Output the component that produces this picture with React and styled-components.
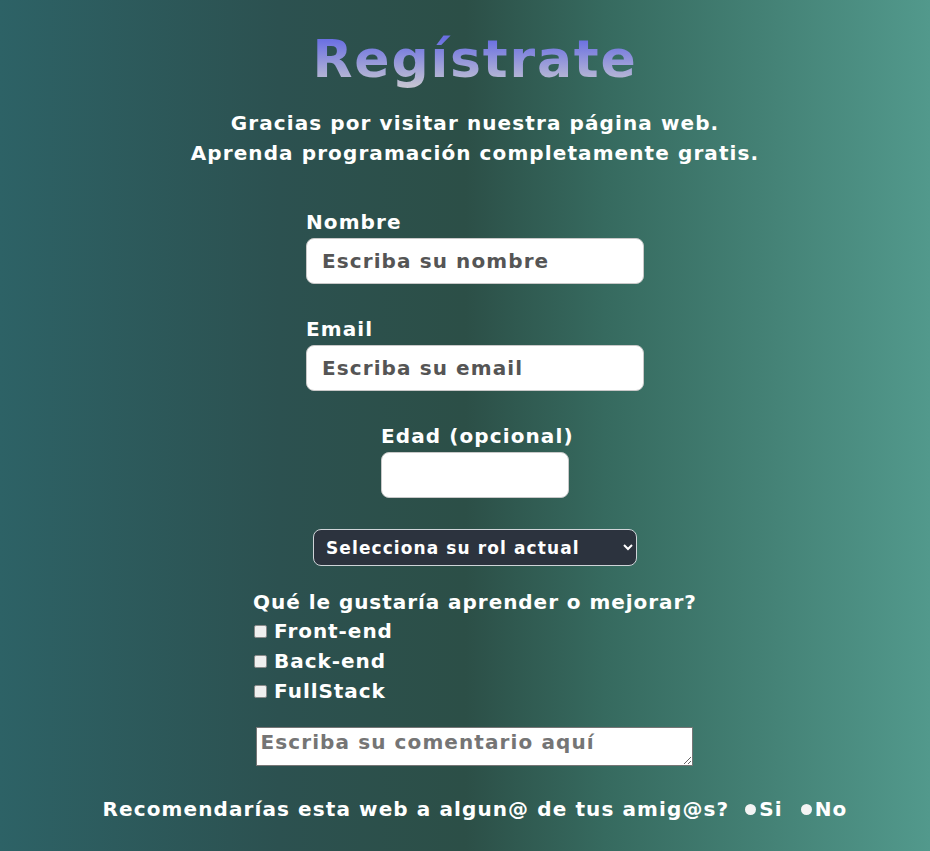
import React from "react";
import styled, { createGlobalStyle } from "styled-components";

const GlobalStyle = createGlobalStyle`
   html, body {
      margin: 0;
      padding: 0;
   }
   body {
      font-family: "DejaVu Sans", "Noto Sans", sans-serif;
      letter-spacing: 1.1px;
      background: linear-gradient(90deg, #2d6266 0%, #2c5150 30%, #2c4f47 50%, #366a5f 65%, #52998c 100%);
      min-height: 851px;
      color: #fff;
   }
`;

const Page = styled.main`
   display: flex;
   flex-direction: column;
   align-items: center;
   padding: 26px 0 0 20px;
   min-height: 851px;
   box-sizing: border-box;
`;

const Title = styled.h1`
   margin: 0;
   font-size: 52px;
   font-weight: 700;
   letter-spacing: 1.8px;
   line-height: 66px;
   background: linear-gradient(180deg, #6a6fe2 20%, #c3c3d2 90%);
   -webkit-background-clip: text;
   background-clip: text;
   color: transparent;
`;

const Intro = styled.p`
   margin: 16px 0 0;
   text-align: center;
   font-size: 20px;
   font-weight: 700;
   line-height: 30px;
`;

const Form = styled.form`
   display: flex;
   flex-direction: column;
   align-items: center;
   margin-top: 38px;
`;

const Field = styled.div`
   display: flex;
   flex-direction: column;
   align-items: flex-start;
   width: ${(p) => p.$width}px;
   margin-bottom: ${(p) => p.$gap}px;
`;

const Label = styled.label`
   font-size: 20px;
   font-weight: 700;
   line-height: 32px;
   white-space: nowrap;
`;

const Input = styled.input`
   box-sizing: border-box;
   width: 100%;
   height: 46px;
   border: 1px solid #c8c8c8;
   border-radius: 8px;
   background: #fff;
   padding: 0 15px;
   font-family: inherit;
   letter-spacing: inherit;
   font-size: 20px;
   font-weight: 700;
   color: #333;
   outline: none;

   &::placeholder {
      color: #555;
   }
`;

const Select = styled.select`
   box-sizing: border-box;
   width: 324px;
   height: 37px;
   margin-bottom: 22px;
   background: #2c333e;
   color: #fff;
   border: 1px solid #cfd4d8;
   border-radius: 8px;
   padding: 0 8px;
   font-family: inherit;
   letter-spacing: inherit;
   font-size: 17px;
   font-weight: 700;
`;

const Group = styled.fieldset`
   border: none;
   margin: 0 0 21px;
   padding: 0;
   display: flex;
   flex-direction: column;
   letter-spacing: 0.95px;
`;

const Question = styled.div`
   font-size: 20px;
   font-weight: 700;
   line-height: 28px;
`;

const Check = styled.label`
   display: flex;
   align-items: center;
   gap: 7px;
   height: 30px;
   font-size: 20px;
   font-weight: 700;

   input {
      appearance: none;
      margin: 0 0 0 1px;
      width: 13px;
      height: 13px;
      border: 1px solid #8a8a8a;
      border-radius: 2px;
      background: #efefef;
   }
`;

const Comment = styled.textarea`
   box-sizing: border-box;
   width: 437px;
   height: 39px;
   border: 1px solid #767676;
   padding: 2px 3px;
   background: #fff;
   font-family: inherit;
   letter-spacing: inherit;
   font-size: 20px;
   font-weight: 700;
   margin-bottom: 29px;

   &::placeholder {
      color: #757575;
   }
`;

const Recommend = styled.div`
   display: flex;
   align-items: center;
   font-size: 20px;
   font-weight: 700;
   line-height: 28px;
`;

const Option = styled.label`
   display: flex;
   align-items: center;
   margin-left: ${(p) => p.$offset}px;

   input {
      appearance: none;
      margin: 0 3px 0 0;
      width: 11px;
      height: 11px;
      border-radius: 50%;
      background: #f4f4f4;
   }
`;

export default function App() {
   return (
      <>
         <GlobalStyle />
         <Page>
            <Title>Regístrate</Title>
            <Intro>
               Gracias por visitar nuestra página web.
               <br />
               Aprenda programación completamente gratis.
            </Intro>
            <Form onSubmit={(e) => e.preventDefault()}>
               <Field $width={338} $gap={29}>
                  <Label htmlFor="nombre">Nombre</Label>
                  <Input id="nombre" placeholder="Escriba su nombre" />
               </Field>
               <Field $width={338} $gap={29}>
                  <Label htmlFor="email">Email</Label>
                  <Input id="email" type="email" placeholder="Escriba su email" />
               </Field>
               <Field $width={188} $gap={31}>
                  <Label htmlFor="edad">Edad (opcional)</Label>
                  <Input id="edad" />
               </Field>
               <Select defaultValue="">
                  <option value="">Selecciona su rol actual</option>
                  <option>Estudiante</option>
                  <option>Junior</option>
                  <option>Senior</option>
               </Select>
               <Group>
                  <Question>Qué le gustaría aprender o mejorar?</Question>
                  <Check><input type="checkbox" />Front-end</Check>
                  <Check><input type="checkbox" />Back-end</Check>
                  <Check><input type="checkbox" />FullStack</Check>
               </Group>
               <Comment placeholder="Escriba su comentario aquí" />
               <Recommend>
                  Recomendarías esta web a algun@ de tus amig@s?
                  <Option $offset={16}><input type="radio" name="rec" />Si</Option>
                  <Option $offset={18}><input type="radio" name="rec" />No</Option>
               </Recommend>
            </Form>
         </Page>
      </>
   );
}
